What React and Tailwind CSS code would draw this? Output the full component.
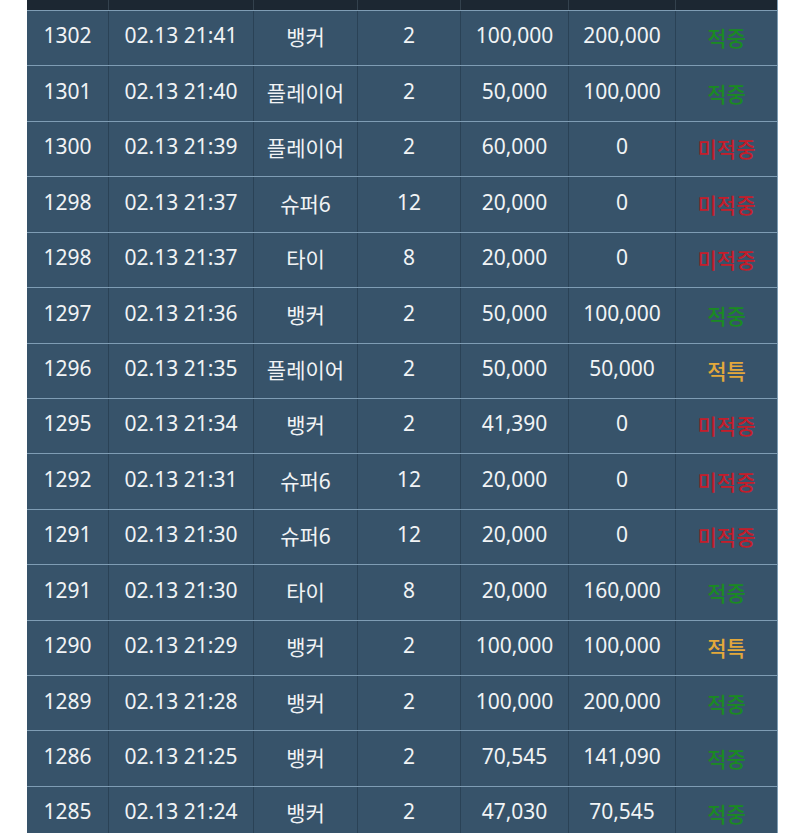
import React from "react";

const rows = [
  ["1302", "02.13 21:41", "뱅커", "2", "100,000", "200,000", "win"],
  ["1301", "02.13 21:40", "플레이어", "2", "50,000", "100,000", "win"],
  ["1300", "02.13 21:39", "플레이어", "2", "60,000", "0", "lose"],
  ["1298", "02.13 21:37", "슈퍼6", "12", "20,000", "0", "lose"],
  ["1298", "02.13 21:37", "타이", "8", "20,000", "0", "lose"],
  ["1297", "02.13 21:36", "뱅커", "2", "50,000", "100,000", "win"],
  ["1296", "02.13 21:35", "플레이어", "2", "50,000", "50,000", "special"],
  ["1295", "02.13 21:34", "뱅커", "2", "41,390", "0", "lose"],
  ["1292", "02.13 21:31", "슈퍼6", "12", "20,000", "0", "lose"],
  ["1291", "02.13 21:30", "슈퍼6", "12", "20,000", "0", "lose"],
  ["1291", "02.13 21:30", "타이", "8", "20,000", "160,000", "win"],
  ["1290", "02.13 21:29", "뱅커", "2", "100,000", "100,000", "special"],
  ["1289", "02.13 21:28", "뱅커", "2", "100,000", "200,000", "win"],
  ["1286", "02.13 21:25", "뱅커", "2", "70,545", "141,090", "win"],
  ["1285", "02.13 21:24", "뱅커", "2", "47,030", "70,545", "win"],
];

const status = {
  win: { label: "적중", cls: "text-[#1a8a22]" },
  lose: { label: "미적중", cls: "text-[#c41d2b]" },
  special: { label: "적특", cls: "text-[#e3a83b]" },
};

const cols = "grid grid-cols-[81px_145px_104px_103px_108px_107px_102px]";

const App = () => {
  return (
    <div
      className="w-[800px] h-[833px] overflow-hidden bg-white pl-[27px]"
      style={{ fontFamily: '"Noto Sans", "Noto Sans CJK KR", sans-serif' }}
    >
      <div className="w-[751px] border-r border-[#7f9db4]">
        {/* header strip */}
        <div className={`${cols} h-[10px] bg-[#1c2732]`}>
          {Array.from({ length: 7 }).map((_, i) => (
            <div key={i} className={i > 0 ? "border-l border-[#33414d]" : ""} />
          ))}
        </div>

        {rows.map((r, idx) => {
          const s = status[r[6]];
          return (
            <div
              key={idx}
              className={`${cols} h-[55.43px] border-t border-[#7f9db4] bg-[#37536a] text-[21px] text-[#f1f3f5]`}
            >
              {r.slice(0, 6).map((c, i) => (
                <div
                  key={i}
                  className={`flex items-center justify-center pb-[4px] ${
                    i > 0 ? "border-l border-[#2a4256]" : ""
                  } ${i === 2 ? "pt-[4px] pb-0" : ""}`}
                >
                  {c}
                </div>
              ))}
              <div
                className={`flex items-center justify-center border-l border-[#2a4256] pt-[2px] font-medium ${s.cls}`}
              >
                {s.label}
              </div>
            </div>
          );
        })}
      </div>
    </div>
  );
};

export default App;
